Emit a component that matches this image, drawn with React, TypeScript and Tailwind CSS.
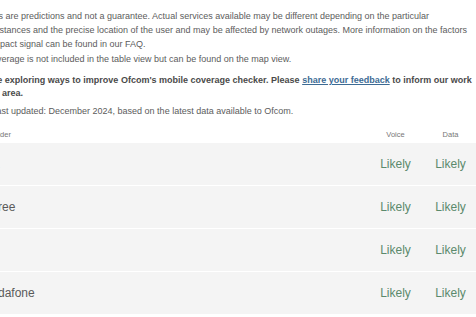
const rows = ['EE', 'Three', 'O2', 'Vodafone'];

export default function App() {
  return (
    <div className="w-[476px] h-[317px] overflow-hidden bg-white font-['Liberation_Sans',Arial,sans-serif]">
      <div className="-ml-[27px] w-[505px] pt-[9px]">
        {/* Notes */}
        <p className="text-[9px] leading-[14px] text-[#5c5c5c] whitespace-nowrap">
          Results are predictions and not a guarantee. Actual services available may be different depending on the particular
          <br />
          circumstances and the precise location of the user and may be affected by network outages. More information on the factors
          <br />
          that impact signal can be found in our FAQ.
        </p>
        <p className="mt-px text-[9px] leading-[14px] text-[#5c5c5c] whitespace-nowrap">
          5G coverage is not included in the table view but can be found on the map view.
        </p>
        <p className="mt-[8px] text-[9px] leading-[13px] font-bold text-[#4a4a4a] whitespace-nowrap">
          We are exploring ways to improve Ofcom&apos;s mobile coverage checker. Please{' '}
          <a href="#" className="text-[#3d6b94] underline underline-offset-1">share your feedback</a> to inform our work
          <br />
          in this area.
        </p>
        <p className="mt-[4px] text-[9px] leading-[14px] text-[#5c5c5c] whitespace-nowrap">
          Data last updated: December 2024, based on the latest data available to Ofcom.
        </p>

        {/* Table */}
        <div className="mt-[5px]">
          <div className="flex items-center h-[20px] pt-[3px] text-[7.5px] text-[#777]">
            <div className="flex-1 pl-[10px]">Provider</div>
            <div className="w-[55px] text-center">Voice</div>
            <div className="w-[55px] text-center">Data</div>
          </div>
          {rows.map((name) => (
            <div key={name} className="flex items-center h-[43px] bg-[#f4f4f4] border-b border-white text-[12px]">
              <div className="flex-1 pl-[11px] text-[#5a5a5a]">{name}</div>
              <div className="w-[55px] text-center text-[#5b8a6c]">Likely</div>
              <div className="w-[55px] text-center text-[#5b8a6c]">Likely</div>
            </div>
          ))}
        </div>
      </div>
    </div>
  );
}
